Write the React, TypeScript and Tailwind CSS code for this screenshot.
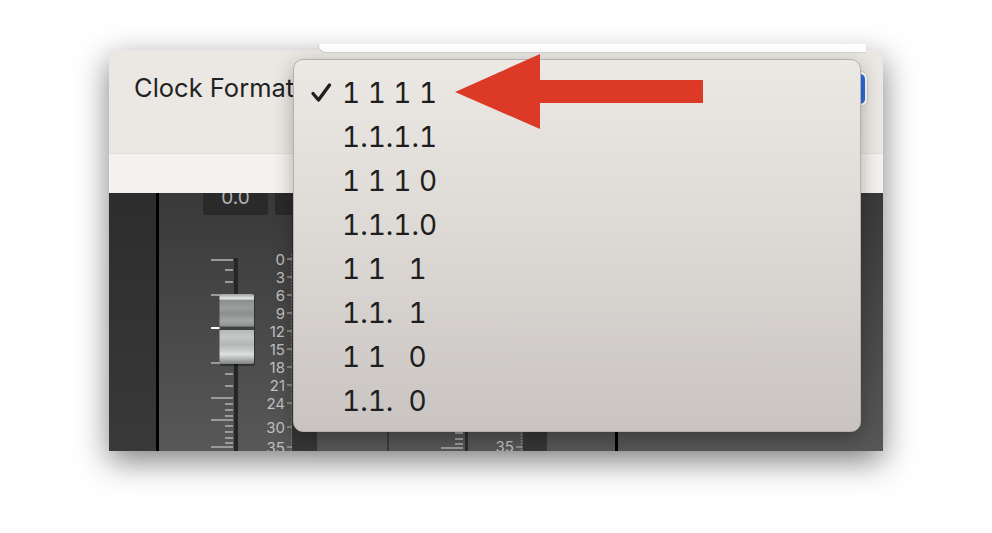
import React from "react";

const ITEMS = [
  { label: "1 1 1 1", checked: true },
  { label: "1.1.1.1" },
  { label: "1 1 1 0" },
  { label: "1.1.1.0" },
  { label: "1 1   1" },
  { label: "1.1.  1" },
  { label: "1 1   0" },
  { label: "1.1.  0" },
];

const SCALE = [
  ["0", 259],
  ["3", 277],
  ["6", 295],
  ["9", 313],
  ["12", 331],
  ["15", 349],
  ["18", 367],
  ["21", 385],
  ["24", 403],
  ["30", 427],
  ["35", 447],
] as const;

const LONG_TICKS = [260, 398, 420, 447];
const MID_TICKS = [295, 363];
const SHORT_TICKS = [270, 282, 374, 386, 404, 410, 416, 426, 432, 438, 443];

function FaderScale() {
  return (
    <svg width="133" height="236" viewBox="159 215 133 236" className="block">
      <defs>
        <linearGradient id="cap" x1="0" y1="0" x2="0" y2="1">
          <stop offset="0%" stopColor="#9ea2a0" />
          <stop offset="4%" stopColor="#c9cdcb" />
          <stop offset="7%" stopColor="#e4e7e5" />
          <stop offset="9%" stopColor="#8b8f8d" />
          <stop offset="20%" stopColor="#9a9e9c" />
          <stop offset="28%" stopColor="#8a8e8c" />
          <stop offset="38%" stopColor="#a2a6a4" />
          <stop offset="46%" stopColor="#8e9290" />
          <stop offset="47%" stopColor="#3f4140" />
          <stop offset="51%" stopColor="#3f4140" />
          <stop offset="52%" stopColor="#b5b9b7" />
          <stop offset="62%" stopColor="#c4c8c6" />
          <stop offset="72%" stopColor="#b1b5b3" />
          <stop offset="80%" stopColor="#c6cac8" />
          <stop offset="86%" stopColor="#dde0de" />
          <stop offset="90%" stopColor="#c3c7c5" />
          <stop offset="100%" stopColor="#7d817f" />
        </linearGradient>
      </defs>

      {/* track */}
      <rect x="234" y="258" width="4" height="200" fill="#262626" />

      {LONG_TICKS.map((y) => (
        <rect key={"l" + y} x="211" y={y - 1} width="22" height="2" fill="#9a9a9a" />
      ))}
      {MID_TICKS.map((y) => (
        <rect key={"m" + y} x="211" y={y - 1} width="9" height="2" fill="#9a9a9a" />
      ))}
      {SHORT_TICKS.map((y) => (
        <rect key={"s" + y} x="225" y={y - 1} width="8" height="2" fill="#9a9a9a" />
      ))}
      <rect x="211" y="327" width="9" height="2" fill="#ffffff" />

      {/* fader cap */}
      <rect x="220" y="296" width="35" height="70" rx="2" fill="#000" opacity="0.35" />
      <rect x="219.5" y="294" width="34.5" height="70" rx="2" fill="url(#cap)" />

      {/* dB scale */}
      <line x1="292" y1="254" x2="292" y2="451" stroke="#8c8c8c" strokeWidth="1.5" strokeDasharray="1.5 1.5" />
      {SCALE.map(([t, y]) => (
        <g key={t}>
          <rect x="287" y={y - 0.75} width="6" height="1.5" fill="#9a9a9a" />
          <text
            x="285"
            y={y}
            textAnchor="end"
            dominantBaseline="central"
            fontSize="15"
            fill="#c0c0c0"
            fontFamily="Inter, 'Liberation Sans', sans-serif"
          >
            {t}
          </text>
        </g>
      ))}
    </svg>
  );
}

function Check() {
  return (
    <svg width="22" height="22" viewBox="0 0 22 22" className="block">
      <path d="M3 11.5 L8.5 18 L19.5 3" fill="none" stroke="#1f1f1f" strokeWidth="3.4" strokeLinecap="round" strokeLinejoin="round" />
    </svg>
  );
}

function Arrow() {
  return (
    <svg width="250" height="78" viewBox="454 53 250 78" className="block">
      <polygon points="455,92 540,54 540,80 703,80 703,103 540,103 540,129" fill="#dc3a26" />
    </svg>
  );
}

export default function App() {
  return (
    <div
      className="relative w-[992px] h-[533px] bg-white overflow-hidden pt-[50px] pl-[109px]"
      style={{ fontFamily: "Inter, 'Liberation Sans', sans-serif" }}
    >
      {/* the panel above, just its bottom edge */}
      <div className="absolute left-[318px] top-[44px] w-[548px] h-[9px] bg-white border-b border-l border-[#d2d2d2] rounded-bl-[8px] z-10" />

      <div className="relative w-[774px] h-[401px] flex flex-col shadow-[0_10px_30px_rgba(0,0,0,0.5)]">
        {/* header */}
        <div className="h-[103px] bg-[#ebe8e4] flex items-start pt-[21px]">
          <div className="pl-[25px] w-[209px] shrink-0 text-[25.5px] leading-[34px] text-[#222] whitespace-nowrap">Clock Format</div>
          <div className="w-[550px] h-[36px] shrink-0 rounded-[7px] bg-white border border-[#d4d0cc] flex justify-end p-[2px]">
            <div className="w-[22px] h-full rounded-[5px] bg-[#2d6de4]" />
          </div>
        </div>

        {/* strip */}
        <div className="h-[40px] bg-[#f4f2ee] border-t border-[#e2deda]" />

        {/* mixer */}
        <div className="flex-1 flex overflow-hidden">
          <div className="w-[47px] shrink-0 bg-gradient-to-b from-[#2d2d2d] to-[#393939]" />
          <div className="w-[3px] shrink-0 bg-black" />
          <div className="w-[133px] shrink-0 flex flex-col overflow-hidden bg-gradient-to-b from-[#393939] to-[#585858]">
            <div className="h-[22px] flex">
              <div className="ml-[44px] w-[65px] h-[40px] -mt-[18px] shrink-0 rounded-[2px] bg-[#2a2a2a] pt-[13px] text-center text-[19px] leading-[19px] text-[#b3b3b3]">
                0.0
              </div>
              <div className="ml-[7px] w-[70px] h-[40px] -mt-[18px] shrink-0 rounded-[2px] bg-[#2a2a2a]" />
            </div>
            <FaderScale />
          </div>
          <div className="w-[25px] shrink-0 bg-gradient-to-b from-[#2e2e2e] to-[#363636]" />
          <div className="w-[70px] shrink-0 bg-gradient-to-b from-[#3a3a3a] to-[#575757]" />
          <div className="w-[2px] shrink-0 bg-[#3a3a3a]" />
          <div className="w-[76px] shrink-0 bg-gradient-to-b from-[#3a3a3a] to-[#575757] flex flex-col justify-end">
            <svg width="76" height="20" viewBox="389 431 76 20" className="block">
              {[433, 439, 444].map((y) => (
                <rect key={y} x="455" y={y - 1} width="8" height="2" fill="#9a9a9a" />
              ))}
              <rect x="441" y="447" width="22" height="2" fill="#9a9a9a" />
            </svg>
          </div>
          <div className="w-[3px] shrink-0 bg-[#2f2f2f]" />
          <div className="w-[55px] shrink-0 bg-gradient-to-b from-[#3a3a3a] to-[#575757] flex flex-col justify-end">
            <svg width="55" height="20" viewBox="468 431 55 20" className="block">
              <line x1="521.5" y1="431" x2="521.5" y2="451" stroke="#8c8c8c" strokeWidth="1.5" strokeDasharray="1.5 1.5" />
              <rect x="516" y="446.25" width="6" height="1.5" fill="#9a9a9a" />
              <text x="514" y="446" textAnchor="end" dominantBaseline="central" fontSize="15" fill="#c0c0c0" fontFamily="Inter, 'Liberation Sans', sans-serif">
                35
              </text>
            </svg>
          </div>
          <div className="w-[24px] shrink-0 bg-gradient-to-b from-[#2e2e2e] to-[#363636]" />
          <div className="w-[68px] shrink-0 bg-gradient-to-b from-[#3a3a3a] to-[#575757]" />
          <div className="w-[3px] shrink-0 bg-black" />
          <div className="flex-1 bg-gradient-to-b from-[#3a3a3a] to-[#575757]" />
        </div>
      </div>

      {/* open popup menu */}
      <div className="absolute left-[293px] top-[59px] w-[568px] h-[373px] rounded-[10px] border border-[#b4b0ac] bg-gradient-to-b from-[#ece9e5] via-[#dcd8d4] to-[#c9c4c1] shadow-[0_6px_20px_rgba(0,0,0,0.3)] pt-[11px] z-20">
        {ITEMS.map((item) => (
          <div key={item.label} className="h-[44px] flex items-center">
            <div className="w-[48px] pl-[16px] flex items-center">{item.checked ? <Check /> : null}</div>
            <span className="text-[28px] leading-[44px] text-[#1e1e1e] whitespace-pre tabular-nums">{item.label}</span>
          </div>
        ))}
      </div>

      {/* callout arrow */}
      <div className="absolute left-[454px] top-[53px] z-30">
        <Arrow />
      </div>
    </div>
  );
}
